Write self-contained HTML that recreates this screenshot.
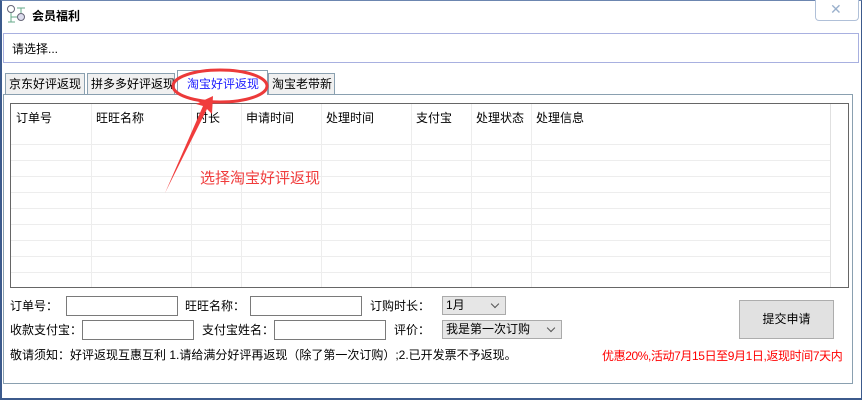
<!DOCTYPE html>
<html><head><meta charset="utf-8"><style>
*{box-sizing:border-box;margin:0;padding:0}
body{width:862px;height:400px;overflow:hidden;background:#fff;font-family:"Liberation Sans","Noto Sans CJK SC","WenQuanYi Zen Hei",sans-serif;font-size:12px;color:#000;position:relative}
.a{position:absolute}
.win{left:0;top:0;width:862px;height:400px;border-left:2px solid #3c5a8c;border-bottom:2px solid #3c5a8c;border-top:1px solid #6c86b0;border-right:1px solid #3c5a8c;background:#fff}
.tab{position:absolute;top:73px;height:21px;border:1px solid #8aa0b0;border-bottom:none;background:#f0f0f0;font-size:12px;line-height:20px;padding-left:3px;white-space:nowrap}
.inp{position:absolute;height:20px;border:1px solid #7a7a7a;background:#fff}
.sel{position:absolute;height:19px;border:1px solid #aaa;background:#e6e6e6;font-size:12px;line-height:17px;padding-left:3px}
.sel:after{content:"";position:absolute;right:7px;top:4px;width:5px;height:5px;border-right:1px solid #555;border-bottom:1px solid #555;transform:rotate(45deg)}
.lbl{position:absolute;font-size:12px;white-space:nowrap}
.hl{position:absolute;left:11px;width:819px;height:1px;background:#ededed}
.vl{position:absolute;top:104px;height:183px;width:1px;background:#ededed}
.hd{position:absolute;top:109px;font-size:12px;white-space:nowrap}
</style></head><body>
<div class="a win"></div>
<svg class="a" style="left:6px;top:4px" width="22" height="20" viewBox="0 0 22 20"><circle cx="5" cy="5" r="3.5" fill="#fff" stroke="#667"/><circle cx="15" cy="13" r="3.5" fill="#dde" stroke="#667"/><path d="M5 9v9M2 18h7M11 4h8M15 4v5M5 13h6" stroke="#6a8" fill="none"/></svg>
<div class="lbl" style="left:32px;top:7px;font-weight:bold;font-size:12px">会员福利</div>
<div class="a" style="left:815px;top:0;width:44px;height:21px;border:1px solid #b0c0d8;border-top:none;border-radius:0 0 4px 4px;background:#fff"></div>
<div class="lbl" style="left:830px;top:1px;color:#9ab0cc;font-size:14px">✕</div>
<div class="a" style="left:3px;top:33px;width:856px;height:30px;border:1px solid #a8b0e0;background:#fff"></div>
<div class="lbl" style="left:12px;top:40px">请选择...</div>
<div class="a" style="left:3px;top:94px;width:850px;height:290px;border:1px solid #8aa0b0;background:#fff"></div>
<div class="tab" style="left:5px;width:80px">京东好评返现</div>
<div class="tab" style="left:87px;width:88px">拼多多好评返现</div>
<div class="tab" style="left:268px;width:67px">淘宝老带新</div>
<div class="tab" style="left:177px;top:70px;height:25px;width:91px;background:#fff;color:#1a1aff;line-height:26px;padding-left:9px">淘宝好评返现</div>
<div class="a" style="left:10px;top:103px;width:839px;height:185px;border:1px solid #666;background:#fff"></div>
<div class="a" style="left:830px;top:104px;width:1px;height:183px;background:#e0e0e0"></div>
<div class="hl" style="top:144px"></div><div class="hl" style="top:160px"></div><div class="hl" style="top:176px"></div><div class="hl" style="top:192px"></div><div class="hl" style="top:208px"></div><div class="hl" style="top:224px"></div><div class="hl" style="top:240px"></div><div class="hl" style="top:256px"></div><div class="hl" style="top:272px"></div>
<div class="vl" style="left:91px"></div><div class="vl" style="left:191px"></div><div class="vl" style="left:241px"></div><div class="vl" style="left:321px"></div><div class="vl" style="left:411px"></div><div class="vl" style="left:471px"></div><div class="vl" style="left:531px"></div>
<div class="hd" style="left:16px">订单号</div><div class="hd" style="left:96px">旺旺名称</div><div class="hd" style="left:196px">时长</div><div class="hd" style="left:246px">申请时间</div><div class="hd" style="left:326px">处理时间</div><div class="hd" style="left:416px">支付宝</div><div class="hd" style="left:476px">处理状态</div><div class="hd" style="left:536px">处理信息</div>
<div class="lbl" style="left:200px;top:167px;color:#f03c3c;font-size:15px">选择淘宝好评返现</div>
<svg class="a" style="left:0;top:0" width="862" height="400"><ellipse cx="220" cy="86" rx="47" ry="16" fill="none" stroke="#ec3a3a" stroke-width="3"/><path d="M165 193 L203 106 L196 104 L213 96 L212 114 L207 109 Z" fill="#f03c3c"/></svg>
<div class="lbl" style="left:10px;top:297px">订单号：</div><div class="inp" style="left:66px;top:296px;width:112px"></div>
<div class="lbl" style="left:185px;top:297px">旺旺名称：</div><div class="inp" style="left:250px;top:296px;width:112px"></div>
<div class="lbl" style="left:370px;top:297px">订购时长：</div><div class="sel" style="left:442px;top:296px;width:64px">1月</div>
<div class="lbl" style="left:10px;top:321px">收款支付宝：</div><div class="inp" style="left:82px;top:320px;width:112px"></div>
<div class="lbl" style="left:202px;top:321px">支付宝姓名：</div><div class="inp" style="left:274px;top:320px;width:112px"></div>
<div class="lbl" style="left:394px;top:321px">评价：</div><div class="sel" style="left:442px;top:320px;width:120px">我是第一次订购</div>
<div class="a" style="left:739px;top:300px;width:95px;height:39px;border:1px solid #adadad;background:#e1e1e1;font-size:12px;text-align:center;line-height:37px">提交申请</div>
<div class="lbl" style="left:10px;top:346px;font-size:12px">敬请须知：好评返现互惠互利 1.请给满分好评再返现（除了第一次订购）;2.已开发票不予返现。</div>
<div class="lbl" style="left:602px;top:347px;color:#f00;font-size:12px;letter-spacing:-0.4px">优惠20%,活动7月15日至9月1日,返现时间7天内</div>
</body></html>
